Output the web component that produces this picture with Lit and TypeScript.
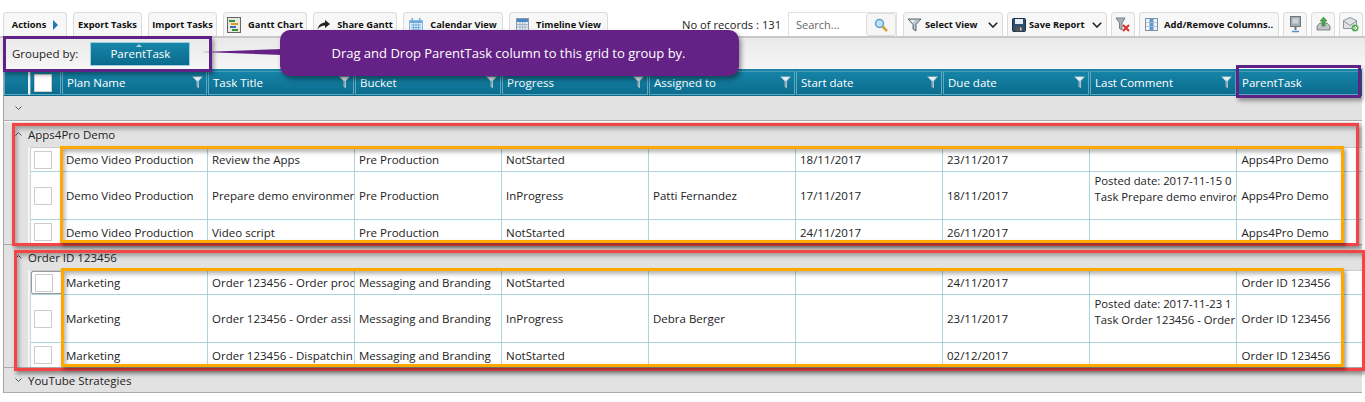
import { LitElement, html, css, svg } from "lit";
import { customElement } from "lit/decorators.js";

const ic: Record<string, any> = {
  gantt: svg`<svg width="14" height="16" viewBox="0 0 14 16"><rect x=".5" y=".5" width="13" height="15" fill="#e8e8e0" stroke="#666"/><rect x="2" y="3" width="6" height="2" fill="#3a8f3a"/><rect x="4" y="6" width="7" height="2" fill="#d8a020"/><rect x="3" y="9" width="6" height="2" fill="#3a6fb0"/><rect x="5" y="12" width="6" height="2" fill="#3a8f3a"/></svg>`,
  share: svg`<svg width="13" height="10" viewBox="0 0 13 10"><path d="M8 0l5 4-5 4V5.500C5 5.500 2.500 6.500 .5 9.500 1 6 3.500 2.800 8 2.500z" fill="#222"/></svg>`,
  cal: svg`<svg width="14" height="14" viewBox="0 0 14 14"><rect x=".5" y="2.500" width="13" height="11" fill="#dcebf8" stroke="#8dbce4"/><rect x="1" y="3" width="12" height="2" fill="#6aa8dd"/><path d="M2 7h10M2 9.500h10M2 12h10M4.500 5.500v7.500M7 5.500v7.500M9.500 5.500v7.500" stroke="#6aa8dd" stroke-width=".8"/><rect x="2.500" y="0" width="1.500" height="3" fill="#6aa8dd"/><rect x="10" y="0" width="1.500" height="3" fill="#6aa8dd"/></svg>`,
  time: svg`<svg width="13" height="13" viewBox="0 0 13 13"><rect x=".5" y=".5" width="12" height="12" fill="#e4ebf2" stroke="#8a9bad"/><rect x="1" y="1" width="11" height="3" fill="#4a87c0"/><path d="M1 6.500h11M1 9h11M4 4v8M6.500 4v8M9 4v8" stroke="#9aacbe" stroke-width=".8"/></svg>`,
  view: svg`<svg width="14" height="14" viewBox="0 0 14 14"><path d="M0 1h13L8 6.500V13L5 11V6.500z" fill="#b7c6cc" stroke="#4d5a60" stroke-width=".9"/><path d="M2 2h5L5 5z" fill="#eef3f5"/></svg>`,
  save: svg`<svg width="14" height="14" viewBox="0 0 14 14"><rect x=".5" y=".5" width="13" height="13" rx="1" fill="#2d4f73" stroke="#1b2f47"/><rect x="3" y="1" width="8" height="5" fill="#e6eef5"/><rect x="3.500" y="8.500" width="7" height="5" fill="#555"/><rect x="8" y="9.500" width="1.500" height="3" fill="#ccc"/></svg>`,
  clear: svg`<svg width="16" height="16" viewBox="0 0 16 16"><path d="M1 1h9L7 6v7L4.500 11.500V6z" fill="#aab4bb" stroke="#5f6b75" stroke-width=".8"/><path d="M8 8l6 6M14 8l-6 6" stroke="#d8322a" stroke-width="2"/></svg>`,
  cols: svg`<svg width="13" height="13" viewBox="0 0 13 13"><rect x=".5" y=".5" width="12" height="12" fill="#f0f4f8" stroke="#7f93a8"/><rect x="4.500" y="1" width="4" height="11" fill="#5b9ad2"/><path d="M1 4.500h11M1 8.500h11" stroke="#a8bccd" stroke-width=".8"/></svg>`,
  mon: svg`<svg width="13" height="17" viewBox="0 0 13 17"><rect x="1.500" y=".5" width="10" height="10" fill="#a4adb1" stroke="#6d767c"/><rect x="3.500" y="2.500" width="6" height="5" fill="#cdd3d6"/><rect x="5.500" y="10" width="2" height="4" fill="#6d767c"/><path d="M3 15.500h7" stroke="#5b8fc0" stroke-width="1.500"/></svg>`,
  up: svg`<svg width="15" height="15" viewBox="0 0 15 15"><path d="M1 9l3-3h7l3 3v4H1z" fill="#bfc4c7" stroke="#6b7276" stroke-width=".8"/><path d="M7.500 0l3.500 4H9v5H6V4H4z" fill="#4aa84a" stroke="#2d7a2d" stroke-width=".5"/></svg>`,
  mail: svg`<svg width="16" height="15" viewBox="0 0 16 15"><path d="M.5 3.500L7 .5l6.500 3v8H.5z" fill="#e0e3e5" stroke="#8d9599"/><path d="M.5 4L7 8.500 13.500 4" fill="none" stroke="#8d9599"/><circle cx="12" cy="11" r="3.500" fill="#55b055"/><path d="M10 11h4M12 9l2 2-2 2" stroke="#fff" fill="none"/></svg>`,
};

const ddChev = svg`<svg class="dd" width="10" height="6" viewBox="0 0 10 6"><path d="M.8 .8L5 5 9.200 .8" fill="none" stroke="#222" stroke-width="1.600"/></svg>`;
const down = svg`<svg class="gc" width="7" height="4" viewBox="0 0 7 4"><path d="M.5 .5l3 3 3-3" fill="none" stroke="#555" stroke-width="1"/></svg>`;
const up = svg`<svg class="gc" width="7" height="4" viewBox="0 0 7 4"><path d="M.5 3.500l3-3 3 3" fill="none" stroke="#555" stroke-width="1"/></svg>`;
const funnel = svg`<svg class="funnel" width="11" height="13" viewBox="0 0 11 13"><path d="M0 .5h11L7 5v7.500L4.500 10.500V5z" fill="#a9c3cf"/><path d="M1.500 1h8L6.500 4.500h-2z" fill="#e6f0f4"/><path d="M5 5.500v5" stroke="#5b8ea3"/></svg>`;

const cols = ["Plan Name", "Task Title", "Bucket", "Progress", "Assigned to", "Start date", "Due date", "Last Comment", "ParentTask"];

type Row = { c: string[]; tall?: boolean; last?: boolean; focus?: boolean };
const g1: Row[] = [
  { c: ["Demo Video Production", "Review the Apps", "Pre Production", "NotStarted", "", "18/11/2017", "23/11/2017", "", "Apps4Pro Demo"] },
  { tall: true, c: ["Demo Video Production", "Prepare demo environmer", "Pre Production", "InProgress", "Patti Fernandez", "17/11/2017", "18/11/2017", "Posted date: 2017-11-15 0\nTask Prepare demo enviror", "Apps4Pro Demo"] },
  { last: true, c: ["Demo Video Production", "Video script", "Pre Production", "NotStarted", "", "24/11/2017", "26/11/2017", "", "Apps4Pro Demo"] },
];
const g2: Row[] = [
  { focus: true, c: ["Marketing", "Order 123456 - Order proc", "Messaging and Branding", "NotStarted", "", "", "24/11/2017", "", "Order ID 123456"] },
  { tall: true, c: ["Marketing", "Order 123456 - Order assi", "Messaging and Branding", "InProgress", "Debra Berger", "", "23/11/2017", "Posted date: 2017-11-23 1\nTask Order 123456 - Order", "Order ID 123456"] },
  { last: true, c: ["Marketing", "Order 123456 - Dispatchin", "Messaging and Branding", "NotStarted", "", "", "02/12/2017", "", "Order ID 123456"] },
];

@customElement("app-root")
export class AppRoot extends LitElement {
  static styles = css`
    :host { display: block; position: relative; width: 1365px; height: 402px; overflow: hidden; background: #fff; font-family: "Open Sans", "Noto Sans", sans-serif; color: #222; }
    .toolbar { display: flex; align-items: flex-start; height: 38px; box-sizing: border-box; padding: 12px 0 0 3px; border-bottom: 2px solid #c8c8c8; position: relative; }
    .btn { box-sizing: border-box; height: 24px; margin-right: 6px; display: flex; align-items: center; justify-content: center; gap: 7px; border: 1px solid #dcdcdc; border-bottom: 0; border-radius: 4px 4px 0 0; background: #f7f7f7; font-weight: 700; font-size: 9.3px; color: #111; white-space: nowrap; flex: none; }
    .btn.tight { margin-right: 4px; gap: 4px; }
    .btn.dropdown { justify-content: flex-start; padding: 0 4px 0 4px; gap: 3px; }
    .btn.cols { justify-content: flex-start; padding-left: 5px; gap: 6px; font-size: 9.45px; }
    .dd { margin-left: auto; }
    .tri { width: 0; height: 0; border-left: 5px solid #1f78b4; border-top: 5px solid transparent; border-bottom: 5px solid transparent; }
    .rec { margin-left: 68px; width: 106px; font-size: 11.2px; line-height: 25px; white-space: nowrap; }
    .search { box-sizing: border-box; width: 109px; height: 24px; margin-right: 6px; border: 1px solid #e2e2e2; border-bottom: 0; display: flex; align-items: center; justify-content: space-between; font-size: 11px; color: #666; padding-left: 7px; flex: none; }
    .sbtn { box-sizing: border-box; width: 30px; height: 23px; border: 1px solid #ddd; border-radius: 3px; background: #f6f6f6; display: flex; align-items: center; justify-content: center; }
    .gpanel { height: 31px; background: linear-gradient(#e9e9e9, #f6f6f6); display: flex; align-items: center; padding-left: 12px; font-size: 11.5px; }
    .chip { box-sizing: border-box; width: 100px; height: 24px; margin-left: 12px; border: 1px solid #9cd0e0; background: linear-gradient(#1787aa, #0b6a8c); color: #fff; display: flex; align-items: center; justify-content: center; font-size: 11.5px; position: relative; }
    .chip::before { content: ""; position: absolute; top: 1px; left: 45px; border: 3px solid transparent; border-top: 0; border-bottom: 3px solid #a9d4e1; }
    .grid { margin-left: 3px; width: 1359px; border-left: 1px solid #a5a5a5; box-sizing: border-box; }
    .hrow { display: grid; grid-template-columns: 26px 32px 146px 147px 147px 147px 147px 147px 147px 147px 125px; height: 27px; background: linear-gradient(#1787aa, #0b6a8c); }
    .hc { box-sizing: border-box; margin: 2px 1px 1px 0; border: 1px solid #5fa6bf; border-top-color: #4c9ab5; color: #fff; font-size: 11.5px; display: flex; align-items: center; justify-content: space-between; padding: 0 3px 1px 4px; white-space: nowrap; }
    .hc.first { border-right: 2px solid #e8f2f5; margin-right: 0; }
    .hcheck { width: 18px; height: 18px; background: #fff; border: 1px solid #ccc; box-sizing: border-box; margin-left: -1px; }
    .funnel { flex: none; }
    .band { height: 24px; background: #e2e2e2; border-bottom: 1px solid #aaa; display: flex; align-items: center; padding-left: 11px; }
    .spacer { height: 1px; background: #fff; }
    .ghead { height: 25px; box-sizing: border-box; padding: 0 0 1px 11px; background: #e2e2e2; display: flex; align-items: center; font-size: 11.5px; gap: 6px; }
    .ghead.solo { height: 24px; padding-bottom: 0; }
    .gc { flex: none; }
    .glines { background: #e2e2e2; border-bottom: 1px solid #aaa; }
    .grows { margin-left: 26px; background: #fff; border-left: 1px solid #c7d6dc; border-top: 1px solid #ccc; box-shadow: -2px 0 0 #f4f4f4; }
    .row { display: grid; grid-template-columns: 31px 146px 147px 147px 147px 147px 147px 147px 147px 124px; height: 24px; box-sizing: border-box; border-bottom: 1px solid #add5e0; }
    .row.tall { height: 48px; }
    .row.last { height: 24px; border-bottom: 0; }
    .c { box-sizing: border-box; border-right: 1px solid #add5e0; padding-left: 4px; font-size: 11.5px; color: #222; display: flex; align-items: center; overflow: hidden; white-space: pre; }
    .c.last { border-right: 0; padding-left: 4.5px; }
    .c.multi { align-items: flex-start; line-height: 16px; padding: 1px 0 0 4.5px; font-size: 11.3px; }
    .chk { border-right: 1px solid #e6e6e6; padding-left: 3px; }
    .chk span { display: block; width: 18px; height: 18px; border: 1px solid #ccc; box-sizing: border-box; }
    .chk.focus { border: 1px solid #999; border-radius: 2px; }
    .mark { position: absolute; box-sizing: border-box; pointer-events: none; box-shadow: 2px 3px 4px rgba(0,0,0,.4), inset 2px 3px 4px rgba(0,0,0,.3); }
    .p { border: 3px solid #5f2387; }
    .r { border: 3px solid #f44444; }
    .o { border: 3px solid #ffa900; }
    .gm { left: 3px; top: 36px; width: 209px; height: 36px; box-shadow: 2px 3px 4px rgba(0,0,0,.35); }
    .pm { left: 1236px; top: 65px; width: 125px; height: 33px; box-shadow: 2px 3px 4px rgba(0,0,0,.35); }
    .r1 { left: 12px; top: 123px; width: 1347px; height: 123px; }
    .r2 { left: 14px; top: 250px; width: 1351px; height: 121px; }
    .o1 { left: 60px; top: 146px; width: 1284px; height: 97px; }
    .o2 { left: 61px; top: 268px; width: 1283px; height: 99px; }
    .callout { position: absolute; left: 280px; top: 30px; width: 459px; height: 46px; border-radius: 10px; background: #642286; color: #fff; font-size: 13px; display: flex; align-items: center; justify-content: center; padding-right: 2px; box-sizing: border-box; box-shadow: 2px 3px 5px rgba(0,0,0,.45); }
    .tail { position: absolute; left: 202px; top: 49px; }
  `;

  private row(r: Row) {
    return html`<div class="row ${r.tall ? "tall" : ""} ${r.last ? "last" : ""}">
      <div class="c chk ${r.focus ? "focus" : ""}"><span></span></div>
      ${r.c.map((t, i) => html`<div class="c ${i === 8 ? "last" : ""} ${t.includes("\n") ? "multi" : ""}">${t}</div>`)}
    </div>`;
  }

  render() {
    return html`
      <div class="toolbar">
        <div class="btn" style="width:64px">Actions <i class="tri"></i></div>
        <div class="btn" style="width:69px">Export Tasks</div>
        <div class="btn" style="width:69px">Import Tasks</div>
        <div class="btn" style="width:84px">${ic.gantt}Gantt Chart</div>
        <div class="btn" style="width:84px">${ic.share}Share Gantt</div>
        <div class="btn" style="width:100px">${ic.cal}Calendar View</div>
        <div class="btn" style="width:99px">${ic.time}Timeline View</div>
        <div class="rec">No of records : 131</div>
        <div class="search">Search...<div class="sbtn"><svg width="14" height="14" viewBox="0 0 14 14"><circle cx="5.500" cy="5.500" r="4" fill="#bfe0f5" stroke="#5aa0d0" stroke-width="1.500"/><path d="M8.500 8.500l4.500 4.500" stroke="#d8a030" stroke-width="2.500"/></svg></div></div>
        <div class="btn tight dropdown" style="width:100px">${ic.view}Select View ${ddChev}</div>
        <div class="btn tight dropdown" style="width:100px">${ic.save}Save Report ${ddChev}</div>
        <div class="btn tight" style="width:24px">${ic.clear}</div>
        <div class="btn tight cols" style="width:140px">${ic.cols}Add/Remove Columns..</div>
        <div class="btn tight" style="width:24px">${ic.mon}</div>
        <div class="btn tight" style="width:24px">${ic.up}</div>
        <div class="btn tight" style="width:24px;margin-right:0">${ic.mail}</div>
      </div>
      <div class="gpanel">Grouped by:<div class="chip">ParentTask</div></div>
      <div class="grid">
        <div class="hrow">
          <div class="hc first"></div>
          <div class="hc"><span class="hcheck"></span></div>
          ${cols.map((c, i) => html`<div class="hc">${c}${i < 8 ? funnel : ""}</div>`)}
        </div>
        <div class="band">${down}</div>
        <div class="spacer"></div>
        <div class="glines">
          <div class="ghead">${up}Apps4Pro Demo</div>
          <div class="grows">${g1.map((r) => this.row(r))}</div>
        </div>
        <div class="glines">
          <div class="ghead">${up}Order ID 123456</div>
          <div class="grows">${g2.map((r) => this.row(r))}</div>
        </div>
        <div class="glines">
          <div class="ghead solo">${down}YouTube Strategies</div>
        </div>
      </div>
      <div class="mark r r1"></div>
      <div class="mark r r2"></div>
      <div class="mark o o1"></div>
      <div class="mark o o2"></div>
      <div class="mark p gm"></div>
      <div class="mark p pm"></div>
      <svg class="tail" width="80" height="6" viewBox="0 0 80 6"><path d="M0 3L80 0v6z" fill="#642286"/></svg>
      <div class="callout">Drag and Drop ParentTask column to this grid to group by.</div>
    `;
  }
}
